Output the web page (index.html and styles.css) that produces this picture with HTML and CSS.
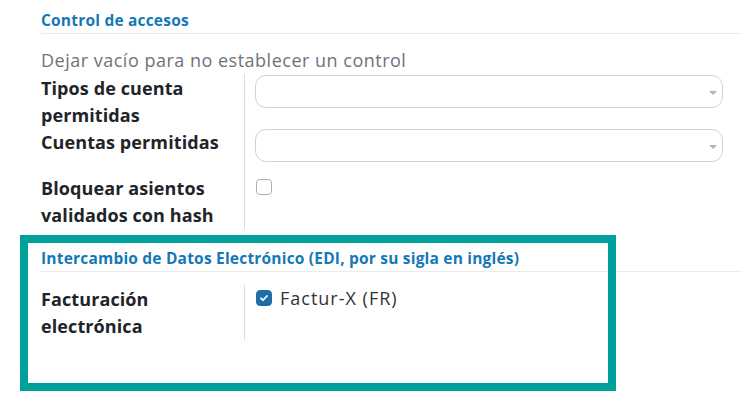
FILE: index.html
```html
<!DOCTYPE html>
<html lang="es">
<head>
<meta charset="utf-8">
<title>Ajustes</title>
<link rel="stylesheet" href="styles.css">
</head>
<body>
<div class="sheet">
  <div class="sep-title first">Control de accesos</div>
  <div class="hint">Dejar vacío para no establecer un control</div>
  <div class="rows">
    <div class="row">
      <div class="label">Tipos de cuenta permitidas</div>
      <div class="field"><div class="select"><span class="caret"></span></div></div>
    </div>
    <div class="row">
      <div class="label">Cuentas permitidas</div>
      <div class="field"><div class="select"><span class="caret"></span></div></div>
    </div>
    <div class="row">
      <div class="label">Bloquear asientos validados con hash</div>
      <div class="field"><span class="check"></span></div>
    </div>
  </div>
  <div class="sep-title second">Intercambio de Datos Electrónico (EDI, por su sigla en inglés)</div>
  <div class="rows">
    <div class="row">
      <div class="label">Facturación electrónica</div>
      <div class="field">
        <span class="check checked"><svg viewBox="0 0 16 16" width="16" height="16"><path d="M5 8.3 L7 10.2 L11 6" fill="none" stroke="#fff" stroke-width="1.8" stroke-linecap="round" stroke-linejoin="round"/></svg></span>
        <span class="opt">Factur-X (FR)</span>
      </div>
    </div>
  </div>
  <div class="highlight"></div>
</div>
</body>
</html>
```
FILE: styles.css
```css
html, body {
  margin: 0;
  padding: 0;
  background: #fff;
}
body {
  font-family: "Open Sans", "DejaVu Sans", sans-serif;
  color: #1f2429;
}
.sheet {
  position: relative;
  padding-left: 41px;
  width: 701px;
  height: 406px;
}
.sep-title {
  font-size: 15.5px;
  letter-spacing: 0.2px;
  font-weight: 700;
  color: #1578b6;
  line-height: 25px;
  border-bottom: 1px solid #ececec;
}
.sep-title.first {
  padding-top: 8px;
}
.sep-title.second {
  margin-top: 18px;
}
.hint {
  padding-top: 13px;
  font-size: 18px;
  letter-spacing: 0.5px;
  line-height: 27px;
  color: #6f7377;
}
.rows {
  display: flex;
  flex-direction: column;
}
.sep-title.second + .rows {
  margin-top: 13px;
}
.row {
  display: flex;
}
.label {
  width: 204px;
  box-sizing: border-box;
  padding-right: 16px;
  padding-top: 1px;
  margin-bottom: -1px;
  font-size: 18px;
  letter-spacing: 0.1px;
  font-weight: 700;
  line-height: 27px;
  border-right: 1px solid #dcdcdc;
  color: #1f2429;
}
.field {
  flex: 1;
  padding-left: 10px;
  display: flex;
  align-items: flex-start;
}
.select {
  position: relative;
  margin-top: 1px;
  margin-bottom: 12px;
  width: 468px;
  height: 33px;
  box-sizing: border-box;
  border: 1px solid #d2d2d2;
  border-radius: 11px;
}
.caret {
  position: absolute;
  right: 5px;
  top: 15px;
  width: 0;
  height: 0;
  border-left: 4px solid transparent;
  border-right: 4px solid transparent;
  border-top: 4px solid #b4b4b4;
}
.check {
  margin-top: 5px;
  margin-left: 1px;
  width: 16px;
  height: 16px;
  box-sizing: border-box;
  border: 1px solid #aab0b8;
  border-radius: 4px;
  display: inline-flex;
}
.check.checked {
  background: #1f6ea8;
  border-color: #1f6ea8;
}
.check svg {
  margin: -1px;
}
.opt {
  margin-left: 8px;
  font-size: 18px;
  letter-spacing: 1px;
  line-height: 27px;
  color: #333;
}
.highlight {
  position: absolute;
  left: 20px;
  top: 235px;
  width: 596px;
  height: 156px;
  box-sizing: border-box;
  border: 8px solid #00a09a;
}
```
